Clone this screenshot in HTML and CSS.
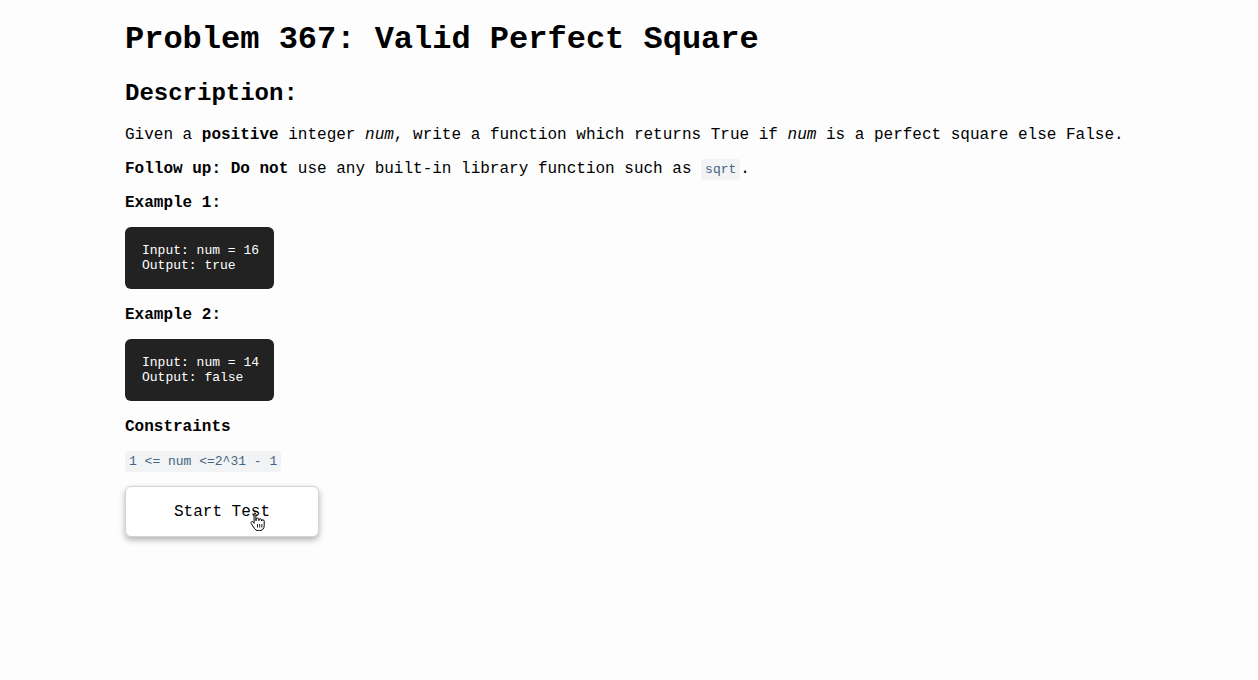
FILE: index.html
```html
<!DOCTYPE html>
<html lang="en">
<head>
<meta charset="utf-8">
<title>Problem 367: Valid Perfect Square</title>
<link rel="stylesheet" href="styles.css">
</head>
<body>
<main class="page">
  <h1 class="title">Problem 367: Valid Perfect Square</h1>
  <h2 class="subtitle">Description:</h2>
  <p class="text">Given a <strong>positive</strong> integer <em>num</em>, write a function which returns True if <em>num</em> is a perfect square else False.</p>
  <p class="text"><strong>Follow up:</strong> <strong>Do not</strong> use any built-in library function such as <code class="inline">sqrt</code>.</p>
  <p class="text"><strong>Example 1:</strong></p>
  <pre class="block">Input: num = 16
Output: true</pre>
  <p class="text"><strong>Example 2:</strong></p>
  <pre class="block">Input: num = 14
Output: false</pre>
  <p class="text"><strong>Constraints</strong></p>
  <p class="text"><code class="inline">1 &lt;= num &lt;=2^31 - 1</code></p>
  <div class="actions">
    <button class="start" type="button">Start Test</button>
    <svg class="cursor" width="16" height="19" viewBox="0 0 16 19" aria-hidden="true">
      <path d="M4.5 1.2c.8 0 1.4.6 1.4 1.4v6.1l.3-.1V7.4c0-.8.6-1.3 1.3-1.3s1.3.6 1.3 1.3v1.2h.1V8c0-.8.6-1.3 1.3-1.3s1.3.6 1.3 1.3v1h.1c0-.8.6-1.2 1.3-1.2s1.3.6 1.3 1.3v4.6c0 2.9-1.8 4.9-4.5 4.9H8.2c-1.7 0-2.8-.8-3.8-2.3L1.2 11.6c-.4-.6-.3-1.4.3-1.8.6-.4 1.3-.3 1.7.3l.9 1.2V2.6c0-.8.6-1.4 1.4-1.4z" fill="#fff" stroke="#000" stroke-width="1"/>
      <path d="M7.5 12v3.5M9.7 12v3.5M11.9 12v3.5" stroke="#000" stroke-width="0.9"/>
    </svg>
  </div>
</main>
</body>
</html>
```

FILE: styles.css
```css
html, body {
  margin: 0;
  padding: 0;
  background: #fdfdfd;
}

body {
  font-family: "Liberation Mono", "Courier New", monospace;
  color: #000;
}

.page {
  width: 1008px;
  margin: 0 auto;
  padding-bottom: 40px;
}

.title {
  font-size: 32px;
  font-weight: bold;
  margin: 21px 0 21px;
}

.subtitle {
  font-size: 24px;
  font-weight: bold;
  margin: 22px 0 19px;
}

.text {
  font-size: 16px;
  margin: 16px 0;
}

.inline {
  font-family: "Liberation Mono", "Courier New", monospace;
  font-size: 13px;
  color: #476582;
  background: #f1f3f5;
  padding: 3px 4px;
  border-radius: 3px;
}

.block {
  display: inline-block;
  margin: -1px 0 1px;
  background: #222;
  color: #fff;
  font-family: "Liberation Mono", "Courier New", monospace;
  font-size: 13px;
  line-height: 15px;
  padding: 16px 15px 16px 17px;
  border-radius: 6px;
}

.actions {
  position: relative;
  width: 194px;
}

.start {
  display: block;
  width: 194px;
  height: 51px;
  font-family: "Liberation Mono", "Courier New", monospace;
  font-size: 16px;
  color: #000;
  background: #fff;
  border: 1px solid #d4d4d4;
  border-radius: 6px;
  box-shadow: 0 3px 6px rgba(0, 0, 0, 0.3);
  padding: 0;
}

.cursor {
  position: absolute;
  left: 125px;
  top: 26px;
}
```
